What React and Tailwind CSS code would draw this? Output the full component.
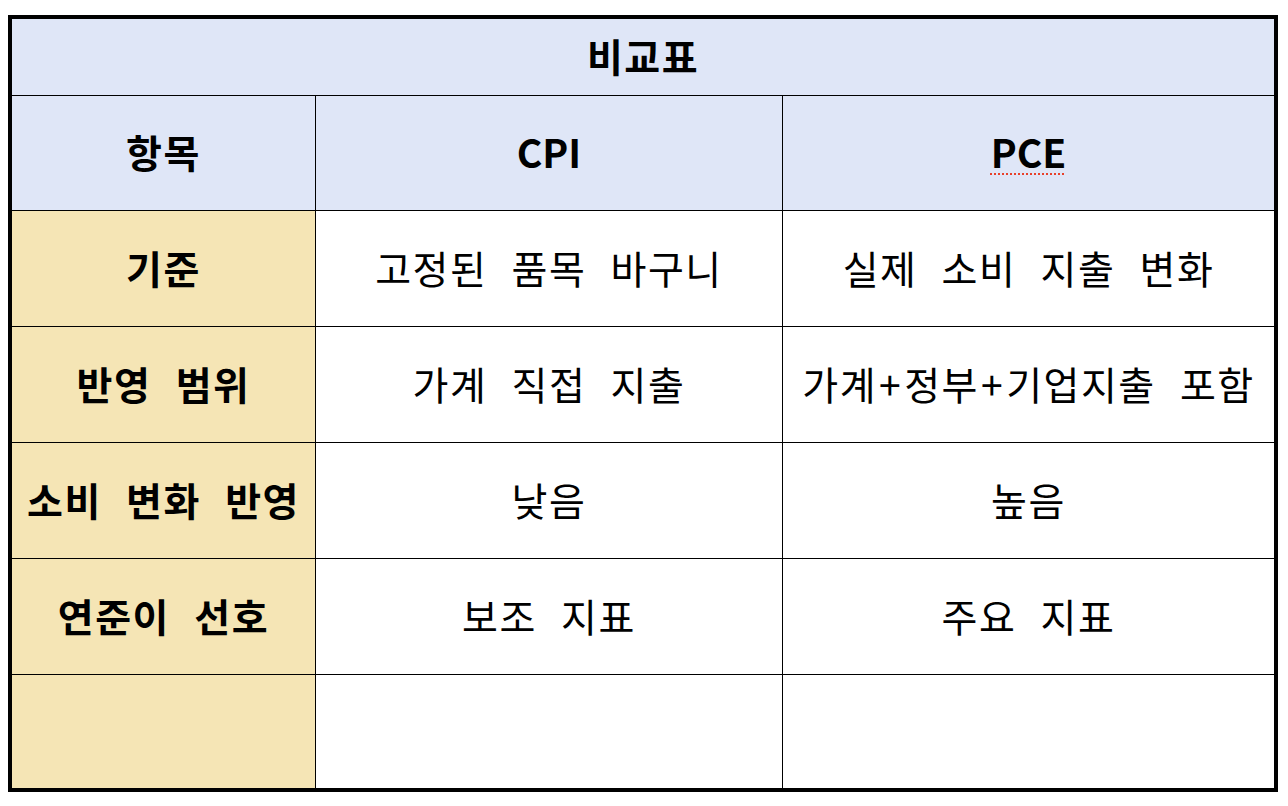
const font = {
  fontFamily: '"Noto Sans CJK KR", "Noto Sans", sans-serif',
};

const rows = [
  { label: "기준", cpi: "고정된 품목 바구니", pce: "실제 소비 지출 변화" },
  { label: "반영 범위", cpi: "가계 직접 지출", pce: "가계+정부+기업지출 포함" },
  { label: "소비 변화 반영", cpi: "낮음", pce: "높음" },
  { label: "연준이 선호", cpi: "보조 지표", pce: "주요 지표" },
  { label: "", cpi: "", pce: "" },
];

// the "+" signs sit wider in the original
function withPlus(text) {
  const parts = text.split("+");
  return parts.map((p, i) => (
    <span key={i}>
      {i > 0 && <span className="mx-[2px]">+</span>}
      {p}
    </span>
  ));
}

function Cell({ children, className = "" }) {
  return (
    <div
      className={`flex items-center justify-center pb-[3px] text-black text-[39px] leading-none tracking-[1.5px] [word-spacing:14px] whitespace-nowrap ${className}`}
    >
      {children}
    </div>
  );
}

export default function App() {
  return (
    <div className="w-[1288px] h-[806px] bg-white pt-[15px] pl-[8px]" style={font}>
      <div className="w-[1270px] border-4 border-black flex flex-col">
        {/* title */}
        <Cell className="h-[77px] border-b border-black bg-[#dfe6f7] font-bold">
          비교표
        </Cell>

        {/* header */}
        <div className="flex h-[115px] border-b border-black bg-[#dfe6f7]">
          <Cell className="w-[304px] border-r border-black font-bold">항목</Cell>
          <Cell className="w-[467px] border-r border-black font-bold text-[37px] tracking-normal">
            CPI
          </Cell>
          <Cell className="flex-1 font-bold text-[37px] tracking-normal">
            <span className="underline decoration-dotted decoration-[#e8402a] decoration-2 underline-offset-[5px]">
              PCE
            </span>
          </Cell>
        </div>

        {rows.map((r, i) => (
          <div
            key={i}
            className={`flex ${
              i < rows.length - 1 ? "h-[116px] border-b border-black" : "h-[113px]"
            }`}
          >
            <Cell className="w-[304px] border-r border-black bg-[#f5e5b5] font-bold">
              {r.label}
            </Cell>
            <Cell className="w-[467px] border-r border-black bg-white">{r.cpi}</Cell>
            <Cell className="flex-1 bg-white">{withPlus(r.pce)}</Cell>
          </div>
        ))}
      </div>
    </div>
  );
}
